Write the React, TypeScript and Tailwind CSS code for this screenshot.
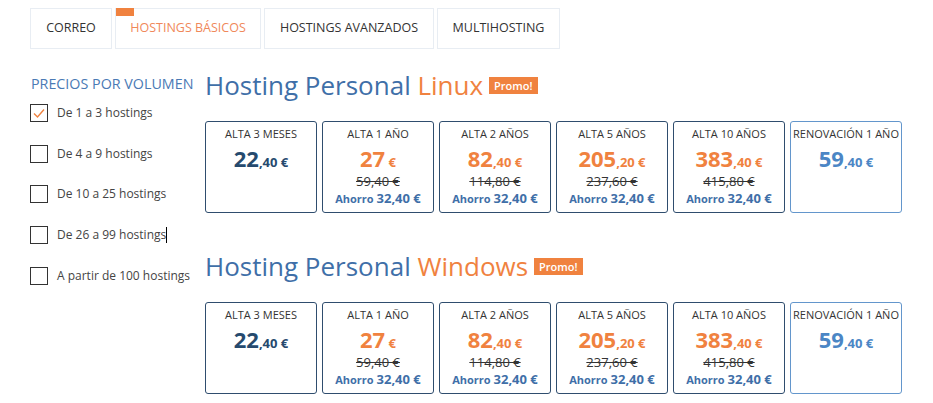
import React from "react";

type Card = {
  title: string;
  int: string;
  dec: string;
  old?: string;
  kind: "navy" | "orange" | "renew";
};

const cards: Card[] = [
  { title: "ALTA 3 MESES", int: "22", dec: ",40 €", kind: "navy" },
  { title: "ALTA 1 AÑO", int: "27", dec: " €", old: "59,40 €", kind: "orange" },
  { title: "ALTA 2 AÑOS", int: "82", dec: ",40 €", old: "114,80 €", kind: "orange" },
  { title: "ALTA 5 AÑOS", int: "205", dec: ",20 €", old: "237,60 €", kind: "orange" },
  { title: "ALTA 10 AÑOS", int: "383", dec: ",40 €", old: "415,80 €", kind: "orange" },
  { title: "RENOVACIÓN 1 AÑO", int: "59", dec: ",40 €", kind: "renew" },
];

function PriceCard({ c }: { c: Card }) {
  const border = c.kind === "renew" ? "border-[#6396cc]" : "border-[#2f4d6e]";
  const color =
    c.kind === "navy" ? "text-[#264a6e]" : c.kind === "renew" ? "text-[#4b86c5]" : "text-[#f0823f]";
  return (
    <div className={`w-[112px] h-[92px] border ${border} rounded-[3px] flex flex-col items-center pt-[4px]`}>
      <div className="text-[11px] leading-[16px] text-[#333] whitespace-nowrap">{c.title}</div>
      <div className={`font-bold ${color} leading-[26px] mt-[3px] whitespace-nowrap`}>
        <span className="text-[22px]">{c.int}</span>
        <span className="text-[13px]">{c.dec}</span>
      </div>
      {c.old && (
        <>
          <div className="text-[13px] leading-[14px] mt-[-1px] text-[#333] line-through">{c.old}</div>
          <div className="font-bold text-[#3f6fa8] leading-[18px] whitespace-nowrap">
            <span className="text-[11px]">Ahorro </span>
            <span className="text-[13px]">32,40 €</span>
          </div>
        </>
      )}
    </div>
  );
}

function Section({ os }: { os: string }) {
  return (
    <div className="flex flex-col">
      <div className="flex items-center h-[40px]">
        <h2 className="text-[26px] leading-[40px] text-[#3f6fa8] whitespace-nowrap">
          Hosting Personal <span className="text-[#f0823f]">{os}</span>
        </h2>
        <span className="ml-[6px] bg-[#f0823f] text-white text-[11px] leading-[17px] px-[5px] font-semibold">
          Promo!
        </span>
      </div>
      <div className="flex gap-[5px] mt-[16px]">
        {cards.map((c) => (
          <PriceCard key={c.title} c={c} />
        ))}
      </div>
    </div>
  );
}

const volumes = [
  "De 1 a 3 hostings",
  "De 4 a 9 hostings",
  "De 10 a 25 hostings",
  "De 26 a 99 hostings",
  "A partir de 100 hostings",
];

const tabs = [
  { t: "CORREO", w: "w-[82px]" },
  { t: "HOSTINGS BÁSICOS", w: "w-[146px]" },
  { t: "HOSTINGS AVANZADOS", w: "w-[170px]" },
  { t: "MULTIHOSTING", w: "w-[123px]" },
];

export default function App() {
  return (
    <div className="w-[933px] h-[403px] bg-white overflow-hidden font-['Open_Sans',sans-serif]">
      <div className="flex gap-[3px] pl-[30px] pt-[8px]">
        {tabs.map((tab, i) => (
          <div
            key={tab.t}
            className={`relative ${tab.w} h-[41px] flex items-center justify-center border border-[#e8edf3] text-[12.5px] whitespace-nowrap ${
              i === 1 ? "text-[#f0885a]" : "text-[#333]"
            }`}
          >
            {i === 1 && <div className="absolute left-0 top-[-1px] w-[18px] h-[8px] bg-[#f0823f]" />}
            {tab.t}
          </div>
        ))}
      </div>
      <div className="flex mt-[16px]">
        <div className="w-[174px] ml-[31px] pt-[10px]">
          <div className="text-[14.3px] leading-[18px] text-[#4a7ab5] whitespace-nowrap">PRECIOS POR VOLUMEN</div>
          <div className="flex flex-col gap-[22.7px] mt-[11px]">
            {volumes.map((v, i) => (
              <div key={v} className="flex items-center h-[18px] ml-[-1px]">
                <div className="w-[18px] h-[18px] border border-[#333] flex items-center justify-center">
                  {i === 0 && (
                    <svg width="14" height="14" viewBox="0 0 14 14">
                      <path d="M2 7.5 L5.5 11 L12 3.5" fill="none" stroke="#f0823f" strokeWidth="1.4" />
                    </svg>
                  )}
                </div>
                <span className="ml-[9px] text-[12px] text-[#444] whitespace-nowrap">{v}</span>
                {i === 3 && <span className="w-[1px] h-[16px] bg-black" />}
              </div>
            ))}
          </div>
        </div>
        <div className="flex flex-col gap-[33px]">
          <Section os="Linux" />
          <Section os="Windows" />
        </div>
      </div>
    </div>
  );
}
